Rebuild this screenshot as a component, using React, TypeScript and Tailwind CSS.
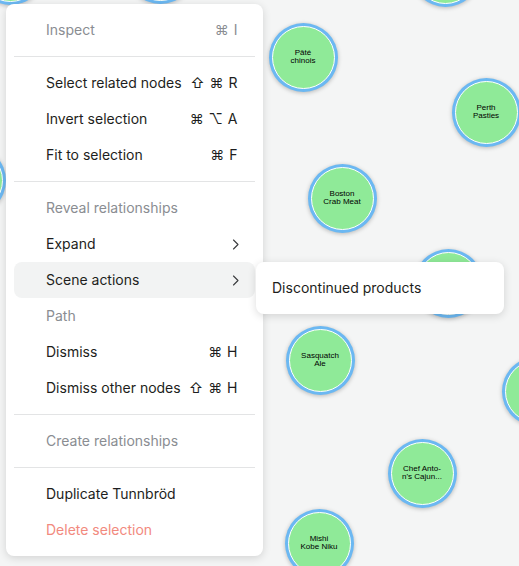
import React from "react";

type NodeProps = { x: number; y: number; label?: string[] };

function GraphNode({ x, y, label }: NodeProps) {
  return (
    <div
      className="absolute w-[69px] h-[69px] rounded-full bg-[#6bb8f2] p-[3px] shadow-[0_1px_4px_rgba(0,0,0,0.25)]"
      style={{ left: x - 34.5, top: y - 34.5 }}
    >
      <div className="w-full h-full rounded-full border-[1.5px] border-white bg-[#8fea98] flex flex-col items-center justify-center text-[8px] leading-[8px] text-black [font-family:'Liberation_Sans',Arial,sans-serif]">
        {label?.map((l, i) => (
          <span key={i}>{l}</span>
        ))}
      </div>
    </div>
  );
}

function Chevron() {
  return (
    <svg width="7" height="11" viewBox="0 0 7 11" fill="none" className="mr-[-1px]">
      <path d="M1.5 1 L6 5.5 L1.5 10" stroke="#3a3b3e" strokeWidth="1.1" strokeLinecap="round" strokeLinejoin="round" />
    </svg>
  );
}

type RowProps = {
  label: string;
  shortcut?: string;
  disabled?: boolean;
  danger?: boolean;
  sub?: boolean;
  active?: boolean;
};

function Row({ label, shortcut, disabled, danger, sub, active }: RowProps) {
  const color = danger ? "text-[#f28a7e]" : disabled ? "text-[#8a8d92]" : "text-[#1d1e20]";
  return (
    <div
      className={
        "h-9 flex items-center justify-between pl-8 pr-[17px] rounded-lg " +
        (active ? "bg-[#f2f3f3] " : "") +
        color
      }
    >
      <span>{label}</span>
      {shortcut && <span className="tracking-[0.5px]">{shortcut}</span>}
      {sub && <Chevron />}
    </div>
  );
}

function Sep() {
  return <div className="h-px bg-[#e3e4e5] my-2" />;
}

export default function App() {
  return (
    <div className="relative w-[519px] h-[566px] overflow-hidden bg-[#f4f5f5] [font-family:Inter,'Noto_Sans','DejaVu_Sans',sans-serif]">
      {/* graph nodes */}
      <GraphNode x={10} y={-30} label={["Frankfurter"]} />
      <GraphNode x={160} y={-31} label={["Rössle", "Sauerkraut"]} />
      <GraphNode x={445} y={-28} />
      <GraphNode x={-29} y={180} />
      <GraphNode x={303} y={57} label={["Pâté", "chinois"]} />
      <GraphNode x={486} y={112} label={["Perth", "Pasties"]} />
      <GraphNode x={342} y={198} label={["Boston", "Crab Meat"]} />
      <GraphNode x={448} y={283} />
      <GraphNode x={320} y={360} label={["Sasquatch", "Ale"]} />
      <GraphNode x={536} y={391} label={["Côte de", "Blaye"]} />
      <GraphNode x={422} y={473} label={["Chef Anto-", "n's Cajun..."]} />
      <GraphNode x={319} y={543} label={["Mishi", "Kobe Niku"]} />

      {/* context menu */}
      <div className="absolute left-[6px] top-[4px] w-[257px] bg-white rounded-lg p-2 text-sm shadow-[0_2px_8px_rgba(0,0,0,0.14)]">
        <Row label="Inspect" shortcut="⌘ I" disabled />
        <Sep />
        <Row label="Select related nodes" shortcut="⇧ ⌘ R" />
        <Row label="Invert selection" shortcut="⌘ ⌥ A" />
        <Row label="Fit to selection" shortcut="⌘ F" />
        <Sep />
        <Row label="Reveal relationships" disabled />
        <Row label="Expand" sub />
        <Row label="Scene actions" sub active />
        <Row label="Path" disabled />
        <Row label="Dismiss" shortcut="⌘ H" />
        <Row label="Dismiss other nodes" shortcut="⇧ ⌘ H" />
        <Sep />
        <Row label="Create relationships" disabled />
        <Sep />
        <Row label="Duplicate Tunnbröd" />
        <Row label="Delete selection" danger />
      </div>

      {/* submenu */}
      <div className="absolute left-[256px] top-[262px] w-[248px] bg-white rounded-lg p-2 text-sm shadow-[0_2px_8px_rgba(0,0,0,0.14)]">
        <div className="h-9 flex items-center pl-2 text-[#1d1e20]">Discontinued products</div>
      </div>
    </div>
  );
}
